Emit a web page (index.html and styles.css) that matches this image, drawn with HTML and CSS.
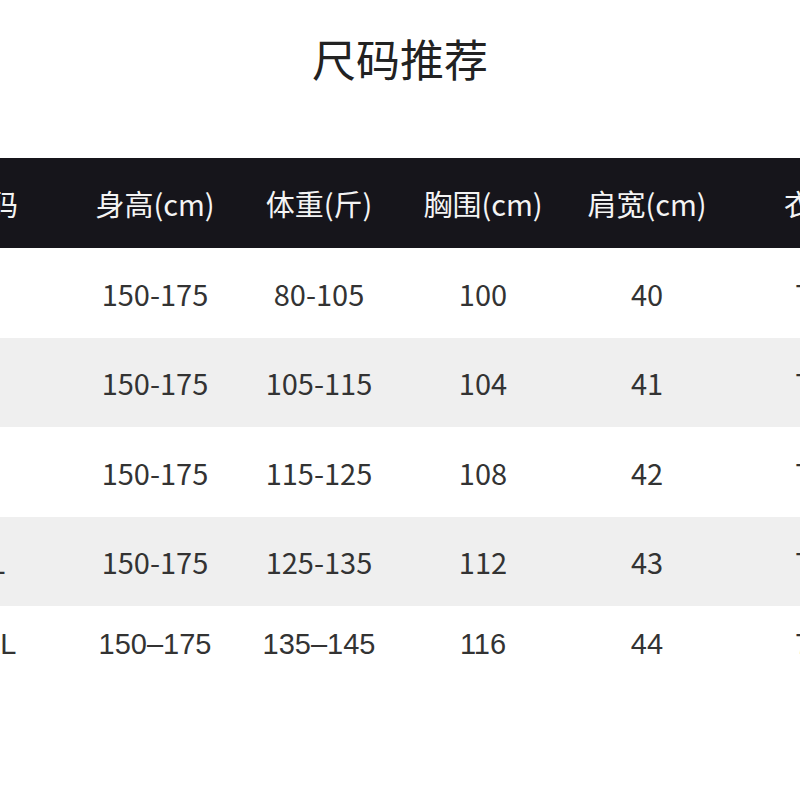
FILE: index.html
```html
<!DOCTYPE html>
<html lang="zh">
<head>
<meta charset="utf-8">
<link rel="stylesheet" href="styles.css">
</head>
<body>
<div class="page">
  <h1 class="title">尺码推荐</h1>
  <div class="table">
    <div class="row head">
      <div class="cell">尺码</div>
      <div class="cell">身高(cm)</div>
      <div class="cell">体重(斤)</div>
      <div class="cell">胸围(cm)</div>
      <div class="cell">肩宽(cm)</div>
      <div class="cell last">衣长(cm)</div>
    </div>
    <div class="row">
      <div class="cell">S</div>
      <div class="cell">150-175</div>
      <div class="cell">80-105</div>
      <div class="cell">100</div>
      <div class="cell">40</div>
      <div class="cell last">70</div>
    </div>
    <div class="row alt">
      <div class="cell">M</div>
      <div class="cell">150-175</div>
      <div class="cell">105-115</div>
      <div class="cell">104</div>
      <div class="cell">41</div>
      <div class="cell last">71</div>
    </div>
    <div class="row">
      <div class="cell">L</div>
      <div class="cell">150-175</div>
      <div class="cell">115-125</div>
      <div class="cell">108</div>
      <div class="cell">42</div>
      <div class="cell last">72</div>
    </div>
    <div class="row alt">
      <div class="cell">XL</div>
      <div class="cell">150-175</div>
      <div class="cell">125-135</div>
      <div class="cell">112</div>
      <div class="cell">43</div>
      <div class="cell last">73</div>
    </div>
    <div class="row final">
      <div class="cell">XXL</div>
      <div class="cell">150–175</div>
      <div class="cell">135–145</div>
      <div class="cell">116</div>
      <div class="cell">44</div>
      <div class="cell last">74</div>
    </div>
  </div>
</div>
</body>
</html>
```

FILE: styles.css
```css
html, body {
  margin: 0;
  padding: 0;
  background: #ffffff;
}
body {
  width: 800px;
  height: 800px;
  overflow: hidden;
  font-family: "Noto Sans CJK SC", "Noto Sans", sans-serif;
  color: #333333;
}
.page {
  width: 800px;
}
.title {
  margin: 0;
  height: 158px;
  box-sizing: border-box;
  padding-top: 31px;
  font-size: 44px;
  line-height: 54px;
  font-weight: 400;
  text-align: center;
  color: #222222;
}
.table {
  margin-left: -95px;
  width: 1000px;
}
.row {
  display: grid;
  grid-template-columns: 168px 164px 164px 164px 164px 1fr;
  height: 89.5px;
  align-items: center;
  font-size: 29px;
  background: #ffffff;
}
.row.head {
  height: 90px;
  background: #16151b;
  color: #f4f4f4;
  font-size: 29px;
}
.row.alt {
  background: #efefef;
}
.row.final {
  font-family: "Liberation Sans", "Noto Sans CJK SC", sans-serif;
  font-size: 29px;
  height: 84px;
  align-items: start;
  padding-top: 22px;
  box-sizing: border-box;
}
.cell {
  text-align: center;
  white-space: nowrap;
}
.cell.last {
  text-align: left;
  padding-left: 66px;
}
.head .cell.last {
  padding-left: 55px;
}
```
